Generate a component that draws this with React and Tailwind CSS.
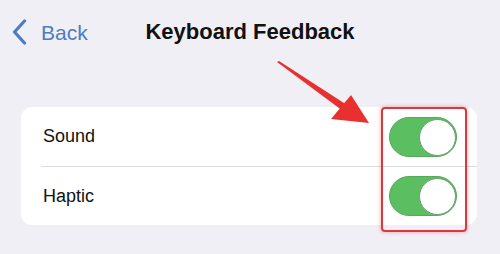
import { useState } from "react";

function Toggle({ on, onChange }) {
  return (
    <button
      onClick={onChange}
      className={`relative w-[68px] h-[40px] rounded-full border border-[#56a85b] ${on ? "bg-[#5bbf62]" : "bg-[#e5e5ea]"}`}
    >
      <span
        className={`absolute top-[1px] w-[37px] h-[37px] rounded-full bg-white border border-[#6f9c72] ${on ? "left-[29px]" : "left-[1px]"}`}
      />
    </button>
  );
}

export default function App() {
  const [sound, setSound] = useState(true);
  const [haptic, setHaptic] = useState(true);

  return (
    <div className="relative w-[500px] h-[254px] overflow-hidden bg-[#f0eff5] font-['Liberation_Sans',Arial,sans-serif]">
      <header className="relative h-[64px] flex items-center">
        <div className="flex items-center gap-[14px] pl-[12px] text-[#4b7cc6]">
          <svg width="15" height="26" viewBox="0 0 15 26" fill="none">
            <path d="M12.5 2 L2.5 13 L12.5 24" stroke="#4b7cc6" strokeWidth="3.2" strokeLinecap="round" strokeLinejoin="round" />
          </svg>
          <span className="text-[21px] leading-none">Back</span>
        </div>
        <h1 className="absolute left-0 right-0 text-center text-[22px] font-bold text-[#111] leading-none">
          Keyboard Feedback
        </h1>
      </header>

      <div className="mt-[43px] ml-[21px] w-[456px] bg-white rounded-[11px]">
        <div className="h-[59px] flex items-center justify-between pl-[22px] pr-[20px]">
          <span className="text-[18px] text-[#111]">Sound</span>
          <Toggle on={sound} onChange={() => setSound(!sound)} />
        </div>
        <div className="ml-[20px] h-px bg-[#dcdce0]" />
        <div className="h-[58px] flex items-center justify-between pl-[22px] pr-[20px]">
          <span className="text-[18px] text-[#111]">Haptic</span>
          <Toggle on={haptic} onChange={() => setHaptic(!haptic)} />
        </div>
      </div>

      {/* annotation overlay */}
      <div className="absolute left-[381px] top-[107px] w-[86px] h-[125px] border-2 border-[#d7393e] rounded-[4px] shadow-[0_0_4px_rgba(230,60,60,0.45)] pointer-events-none" />
      <svg className="absolute left-0 top-0 pointer-events-none" width="500" height="254" viewBox="0 0 500 254">
        <polygon points="277,62 279,61 347,105 343,111" fill="#e8302e" />
        <polygon points="369,123 331,119 351,95" fill="#e8302e" />
      </svg>
    </div>
  );
}
